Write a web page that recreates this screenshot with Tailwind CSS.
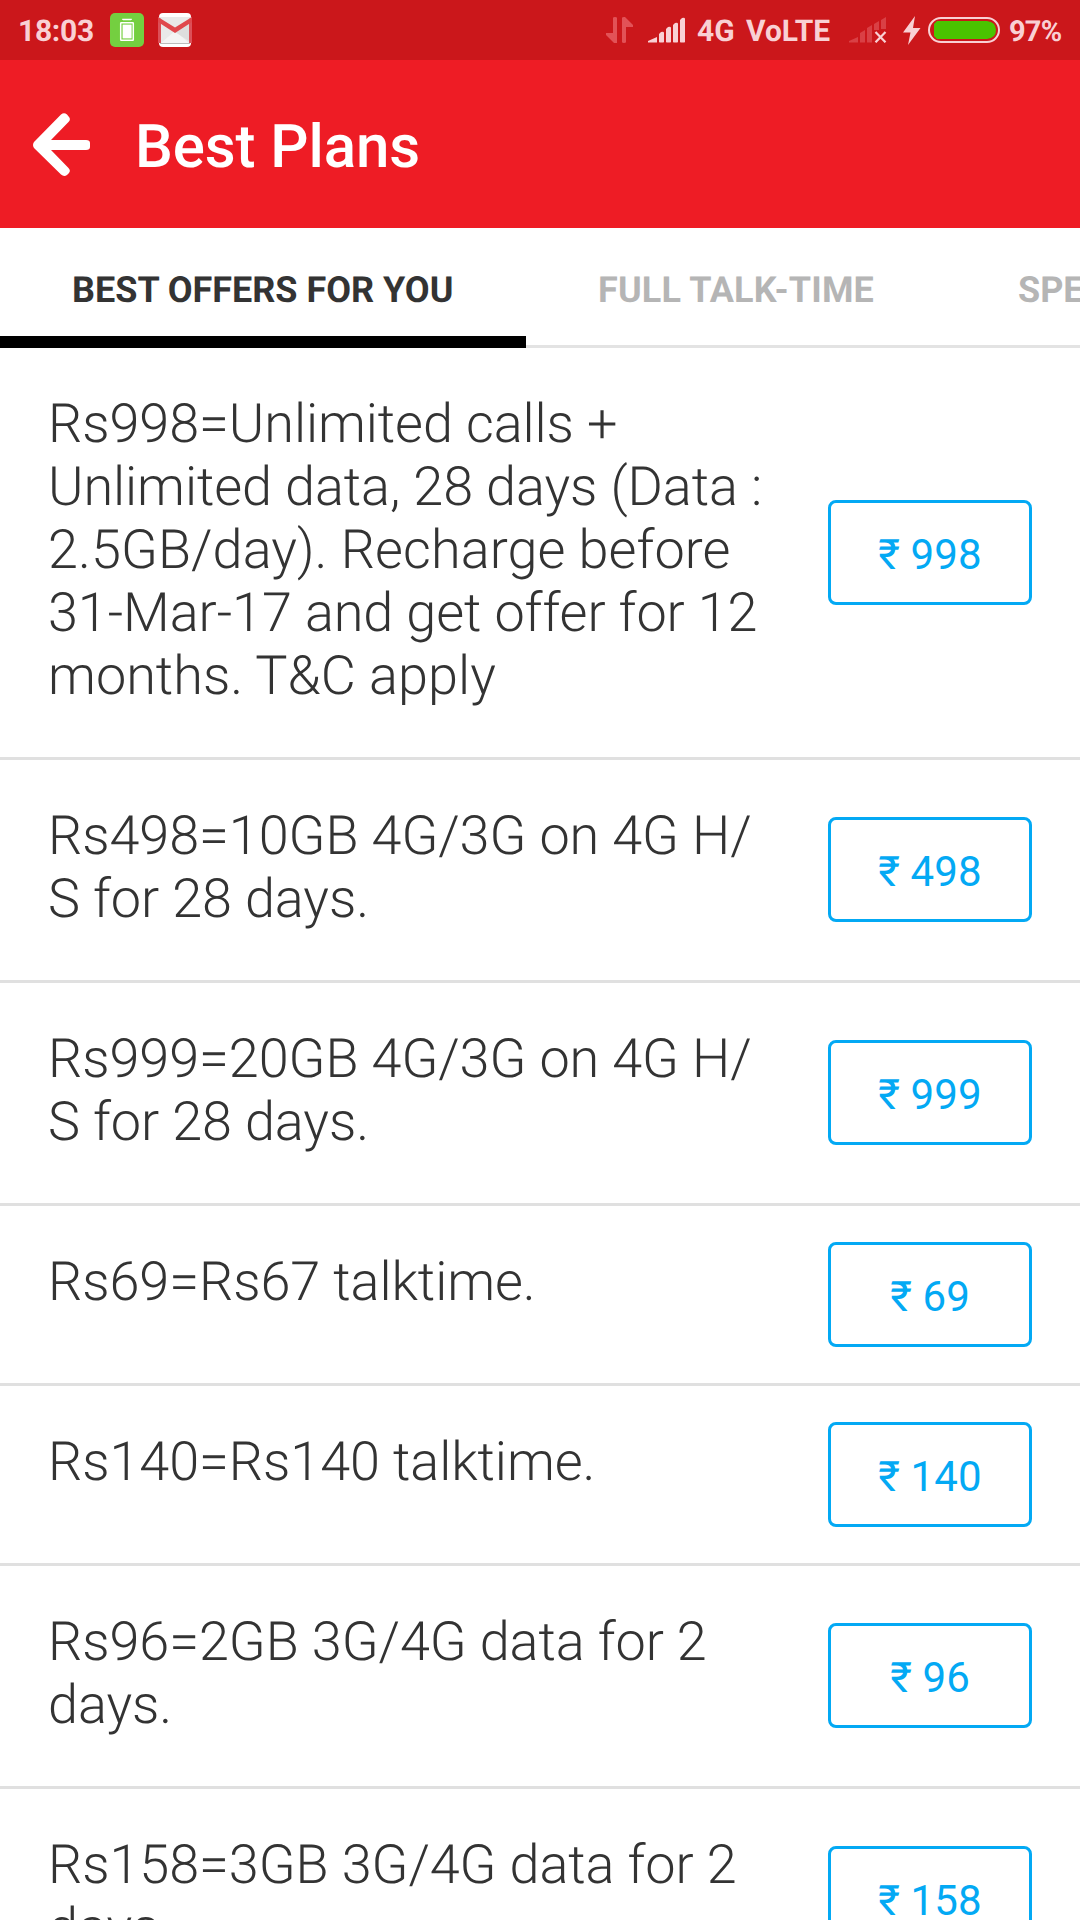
<!DOCTYPE html>
<html lang="en">
<head>
<meta charset="utf-8">
<title>Best Plans</title>
<script src="https://cdn.jsdelivr.net/npm/@tailwindcss/browser@4"></script>
</head>
<body class="bg-white font-['Roboto',sans-serif] text-[#333333] [text-rendering:geometricPrecision]">
<div class="flex h-[1920px] w-[1080px] flex-col overflow-hidden bg-white">
  <!-- Status bar -->
  <div class="flex h-[60px] shrink-0 items-center bg-[#cb171b] text-[30px] leading-[60px] font-bold whitespace-nowrap text-[#f9d0d4]">
    <span class="ml-[18px] w-[92px] pt-[4px] tracking-[-0.3px]">18:03</span>
    <svg class="h-[34px] w-[34px] shrink-0" viewBox="0 0 34 34"><rect width="34" height="34" rx="5" fill="#74cf40"/><path d="M13 7V6.500h8V7" stroke="#fff" stroke-width="1.600" fill="none"/><rect x="10.700" y="9.700" width="12.600" height="17.600" rx=".6" fill="none" stroke="#fff" stroke-width="1.500"/><rect x="12.600" y="11.600" width="9" height="13.800" fill="#fff"/></svg>
    <svg class="ml-[14px] h-[34px] w-[34px] shrink-0" viewBox="0 0 34 34"><rect x="1" width="32" height="34" rx="4" fill="#fff"/><rect x=".5" y="4" width="33" height="26" fill="#e9e9e9"/><path d="M3 30L17 18L31 30Z" fill="#f4f4f4"/><path d="M17 19L31 10V28Z" fill="#dedede"/><path d="M0 4L3 6V30H0zM34 4L31 6V30H34z" fill="#dc5058"/><path d="M0 4L17 14.500L34 4V9L17 20L0 9Z" fill="#e0484d"/><path d="M2 30.500H32" stroke="#bbb"/></svg>
    <svg class="ml-[414px] h-[26px] w-[27px] shrink-0" viewBox="0 0 27 26" fill="#e25257"><path d="M7 1Q7 0 9 0Q11 0 11 1V26H8L0 18V16H7ZM16 1Q16 0 18 0H19L27 8V10H20V25Q20 26 18 26Q16 26 16 25Z"/></svg>
    <svg class="ml-[15px] h-[26px] w-[38px] shrink-0" viewBox="0 0 38 26" fill="#f9d0d4"><path d="M0 24L9 20V25.500H0ZM11 17L13 15Q16 14 16 16V25Q16 25.500 13.500 25.500Q11 25.500 11 25ZM18 12L20 10Q23 9 23 11V25Q23 25.500 20.500 25.500Q18 25.500 18 25ZM25 8L27 6Q30 5 30 7V25Q30 25.500 27.500 25.500Q25 25.500 25 25ZM32 3L34 1Q37 0 37 2V25Q37 25.500 34.500 25.500Q32 25.500 32 25Z"/></svg>
    <span class="ml-[11px] w-[49px] pt-[4px]">4G</span>
    <span class="w-[103px] pt-[4px]">VoLTE</span>
    <svg class="h-[26px] w-[38px] shrink-0" viewBox="0 0 38 26"><path fill="#d94045" d="M0 24L9 20V25.500H0ZM11 16L16 13V25.500H11ZM18 11L23 8V25.500H18ZM25 7L30 4V13L25 13ZM32 3L37 0V12H32Z"/><path d="M26.500 15L36.500 25.300M36.500 15L26.500 25.300" stroke="#f9d0d4" stroke-width="2.200"/></svg>
    <svg class="ml-[16px] h-[29px] w-[18px] shrink-0" viewBox="0 0 18 29"><path fill="#f9d0d4" d="M12 0L0 16.500H7.500L5 29L17.500 12H10Z"/></svg>
    <svg class="ml-[7px] h-[26px] w-[72px] shrink-0" viewBox="0 0 72 26"><rect x="1" y="1" width="70" height="24" rx="12" fill="none" stroke="#f9d0d4" stroke-width="2"/><path d="M9 4H59Q68 5 68 13Q68 21 59 22H9L6 19V7Z" fill="#4ac400"/></svg>
    <span class="ml-[9px] pt-[3px] text-[29px] tracking-[-0.8px]">97%</span>
  </div>
  <!-- App bar -->
  <div class="flex h-[168px] shrink-0 items-center bg-[#ee1c25] text-white">
    <svg class="mt-[2px] ml-[33px] h-[64px] w-[58px] shrink-0" viewBox="0 0 58 64"><path d="M1 29L28 1.500Q31 -1 34 1.500L36 4Q38 6.500 35.500 9L18 27H53Q57 27 57 30V34Q57 37 53 37H18L35.500 55Q38 57.500 36 60L34 62Q31 64 28 61.500L1 35Q-1 32 1 29Z" fill="#fff"/></svg>
    <h1 class="ml-[44px] pt-[5px] text-[60px] leading-[70px] font-medium tracking-[-0.1px]">Best Plans</h1>
  </div>
  <!-- Tabs -->
  <div class="flex h-[120px] shrink-0 overflow-hidden border-b-[3px] border-[#e3e3e3] text-[36px] leading-[42px] font-bold whitespace-nowrap text-[#b5b5b5]">
    <div class="w-[526px] shrink-0 pt-[41px] pl-[72px] text-[#333333]">BEST OFFERS FOR YOU</div>
    <div class="w-[420px] shrink-0 pt-[41px] pl-[72px] tracking-[0.15px]">FULL TALK-TIME</div>
    <div class="shrink-0 pt-[41px] pl-[72px]">SPECIAL OFFERS</div>
  </div>
  <div class="relative z-10 -mt-[12px] h-[12px] w-[526px] shrink-0 bg-black"></div>
  <!-- Plans -->
  <ul class="shrink-0 text-[54px] leading-[63px] font-light tracking-[-0.09px] whitespace-nowrap">
    <li class="flex h-[412px] border-b-[3px] border-[#e0e0e0] pl-[48px]"><p class="w-[780px] pt-[45px]">Rs998=Unlimited calls +<br>Unlimited data, 28 days (Data :<br><span class="tracking-[0.04px]">2.5GB/day). Recharge before</span><br>31-Mar-17 and get offer for 12<br><span class="tracking-[0.01px]">months. T&amp;C apply</span></p><button class="mt-[152px] h-[105px] w-[204px] rounded-[8px] border-[3px] border-[#03a9f4] pt-[3px] text-[42px] font-normal tracking-[0.1px] text-[#03a9f4]">₹ 998</button></li>
    <li class="flex h-[223px] border-b-[3px] border-[#e0e0e0] pl-[48px]"><p class="w-[780px] pt-[45px]">Rs498=10GB 4G/3G on 4G H/<br>S for 28 days.</p><button class="mt-[57px] h-[105px] w-[204px] rounded-[8px] border-[3px] border-[#03a9f4] pt-[3px] text-[42px] font-normal tracking-[0.1px] text-[#03a9f4]">₹ 498</button></li>
    <li class="flex h-[223px] border-b-[3px] border-[#e0e0e0] pl-[48px]"><p class="w-[780px] pt-[45px]">Rs999=20GB 4G/3G on 4G H/<br>S for 28 days.</p><button class="mt-[57px] h-[105px] w-[204px] rounded-[8px] border-[3px] border-[#03a9f4] pt-[3px] text-[42px] font-normal tracking-[0.1px] text-[#03a9f4]">₹ 999</button></li>
    <li class="flex h-[180px] border-b-[3px] border-[#e0e0e0] pl-[48px]"><p class="w-[780px] pt-[45px]">Rs69=Rs67 talktime.</p><button class="mt-[36px] h-[105px] w-[204px] rounded-[8px] border-[3px] border-[#03a9f4] pt-[3px] text-[42px] font-normal tracking-[0.1px] text-[#03a9f4]">₹ 69</button></li>
    <li class="flex h-[180px] border-b-[3px] border-[#e0e0e0] pl-[48px]"><p class="w-[780px] pt-[45px]">Rs140=Rs140 talktime.</p><button class="mt-[36px] h-[105px] w-[204px] rounded-[8px] border-[3px] border-[#03a9f4] pt-[3px] text-[42px] font-normal tracking-[0.1px] text-[#03a9f4]">₹ 140</button></li>
    <li class="flex h-[223px] border-b-[3px] border-[#e0e0e0] pl-[48px]"><p class="w-[780px] pt-[45px]">Rs96=2GB 3G/4G data for 2<br>days.</p><button class="mt-[57px] h-[105px] w-[204px] rounded-[8px] border-[3px] border-[#03a9f4] pt-[3px] text-[42px] font-normal tracking-[0.1px] text-[#03a9f4]">₹ 96</button></li>
    <li class="flex h-[223px] border-b-[3px] border-[#e0e0e0] pl-[48px]"><p class="w-[780px] pt-[45px]">Rs158=3GB 3G/4G data for 2<br>days.</p><button class="mt-[57px] h-[105px] w-[204px] rounded-[8px] border-[3px] border-[#03a9f4] pt-[3px] text-[42px] font-normal tracking-[0.1px] text-[#03a9f4]">₹ 158</button></li>
  </ul>
</div>
</body>
</html>
